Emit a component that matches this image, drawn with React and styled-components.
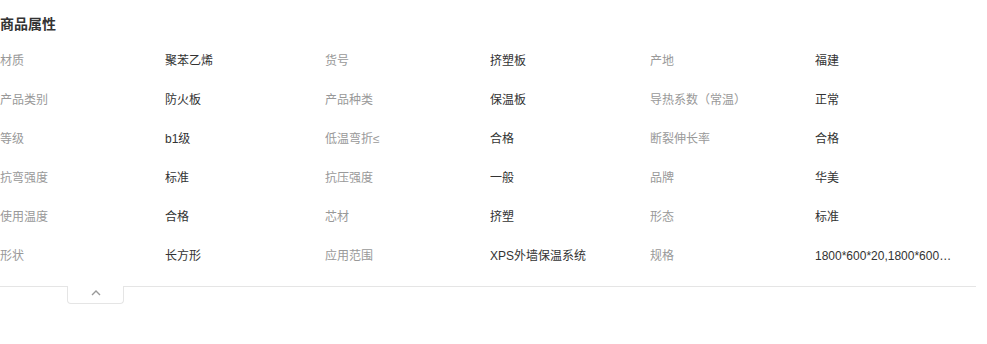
import React from 'react'
import styled, { createGlobalStyle } from 'styled-components';

const GlobalStyle = createGlobalStyle`
  body {
    margin: 0;
    background: #fff;
    font-family: "Liberation Sans", Arial, "Noto Sans CJK SC", sans-serif;
  }
`

const Container = styled.div`
  width: 976px;
  padding-top: 14px;
`

const Title = styled.h3`
  margin: 0;
  font-size: 14px;
  line-height: 20px;
  font-weight: bold;
  color: #333;
`

const Grid = styled.div`
  display: grid;
  grid-template-columns: 165px 160px 165px 160px 165px 160px;
  grid-auto-rows: 39px;
  padding: 8px 0 10px;
  border-bottom: 1px solid #e5e5e5;
`

const Cell = styled.div`
  font-size: 12px;
  line-height: 39px;
  color: ${props => props.label ? '#999' : '#333'};
  white-space: nowrap;
  overflow: hidden;
  text-overflow: ellipsis;
  padding-right: ${props => props.label ? '0' : '22px'};
`

const Toggle = styled.button`
  display: flex;
  align-items: center;
  justify-content: center;
  width: 57px;
  height: 18px;
  margin-left: 67px;
  margin-top: -1px;
  padding: 0 0 4px;
  background: #fff;
  border: 1px solid #e5e5e5;
  border-top: none;
  border-radius: 0 0 4px 4px;
  cursor: pointer;
`

const attrs = [
  ['材质', '聚苯乙烯'], ['货号', '挤塑板'], ['产地', '福建'],
  ['产品类别', '防火板'], ['产品种类', '保温板'], ['导热系数（常温）', '正常'],
  ['等级', 'b1级'], ['低温弯折≤', '合格'], ['断裂伸长率', '合格'],
  ['抗弯强度', '标准'], ['抗压强度', '一般'], ['品牌', '华美'],
  ['使用温度', '合格'], ['芯材', '挤塑'], ['形态', '标准'],
  ['形状', '长方形'], ['应用范围', 'XPS外墙保温系统'], ['规格', '1800*600*20,1800*600*30,1800*600*40'],
]

export default function App() {
  return (
    <Container>
      <GlobalStyle />
      <Title>商品属性</Title>
      <Grid>
        {attrs.map(([k, v]) => (
          <React.Fragment key={k}>
            <Cell label>{k}</Cell>
            <Cell title={v}>{v}</Cell>
          </React.Fragment>
        ))}
      </Grid>
      <Toggle>
        <svg width="10" height="6" viewBox="0 0 10 6">
          <path d="M1 5 L5 1 L9 5" fill="none" stroke="#999" strokeWidth="1.4" />
        </svg>
      </Toggle>
    </Container>
  )
}
